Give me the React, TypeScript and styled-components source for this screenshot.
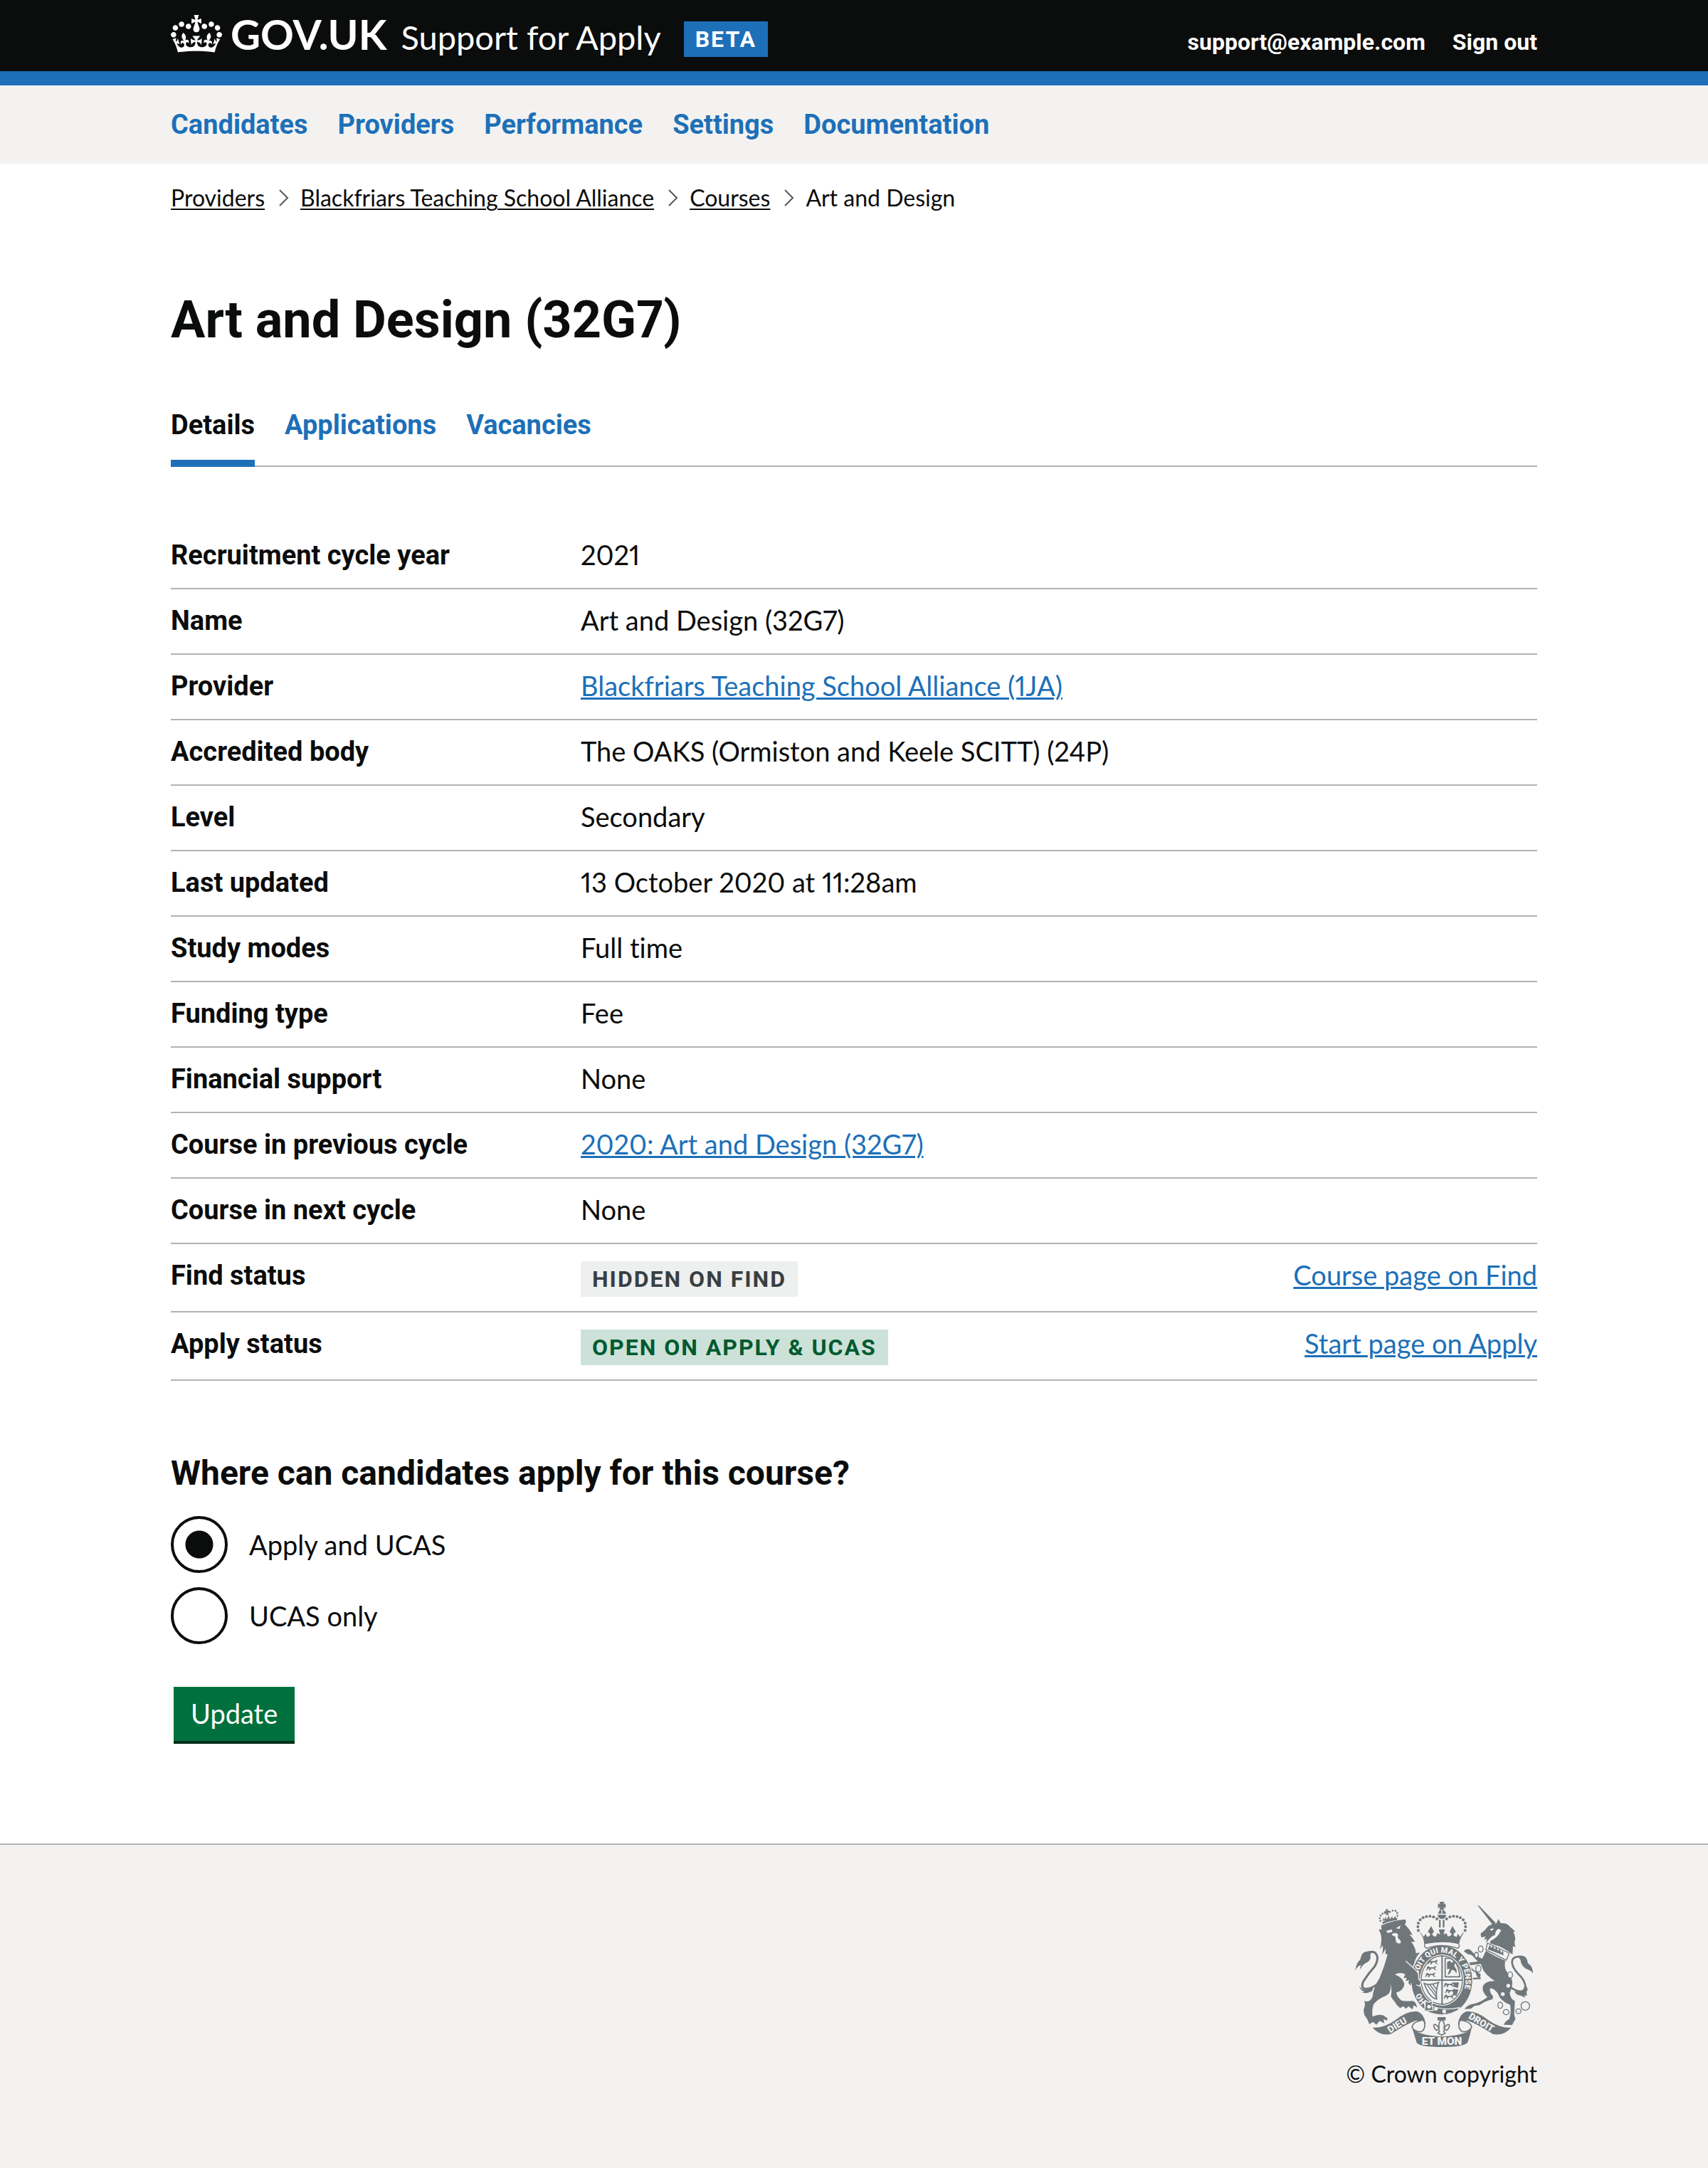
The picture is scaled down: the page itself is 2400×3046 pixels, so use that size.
import React from "react";
import styled, { createGlobalStyle } from "styled-components";

const c = {
  black: "#0b0c0c",
  blue: "#1d70b8",
  grey: "#f3f2f1",
  border: "#b1b4b6",
  crest: "#6f777b",
  green: "#00703c",
};
const bold = `font-family: Roboto, sans-serif; font-weight: 700;`;

const Global = createGlobalStyle`
  *, *::before, *::after { box-sizing: border-box; }
  body {
    margin: 0;
    background: ${c.grey};
    color: ${c.black};
    font-family: Lato, Roboto, sans-serif;
    font-size: 38px;
    line-height: 50px;
    font-variant-ligatures: none;
    font-variant-numeric: proportional-nums;
  }
  h1, h2, p, ul, ol, dl, dd, dt, fieldset { margin: 0; padding: 0; }
  ul, ol { list-style: none; }
  fieldset { border: 0; min-width: 0; }
`;

const Page = styled.div`
  background: #fff;
`;
const Container = styled.div`
  max-width: 1920px;
  margin: 0 auto;
`;

const Header = styled.header`
  background: ${c.black};
  border-bottom: 20px solid ${c.blue};
  color: #fff;
`;
const HeaderRow = styled(Container)`
  display: flex;
  justify-content: space-between;
  align-items: baseline;
  height: 100px;
  padding-top: 16px;
`;
const Brand = styled.div`
  display: flex;
  align-items: baseline;
`;
const HomeLink = styled.a`
  display: flex;
  align-items: baseline;
  gap: 12px;
  color: #fff;
  text-decoration: none;
  font-weight: 700;
  font-size: 58px;
  line-height: 64px;
`;
const Crown = styled.svg`
  width: 72px;
  height: 53px;
  fill: #fff;
  align-self: flex-end;
  margin-bottom: 6px;
`;
const ServiceLink = styled.a`
  color: #fff;
  text-decoration: none;
  font-size: 47px;
  line-height: 60px;
  margin-left: 20px;
`;
type Tone = "blue" | "grey" | "green";
const tones: Record<Tone, string> = {
  blue: `background: ${c.blue}; color: #fff;`,
  grey: `background: #eeefef; color: #383f43;`,
  green: `background: #cce2d8; color: #005a30;`,
};
const Tag = styled.strong<{ $tone: Tone }>`
  display: block;
  width: fit-content;
  padding: 5px 16px;
  ${bold}
  font-size: 32px;
  line-height: 40px;
  letter-spacing: 2px;
  text-transform: uppercase;
  ${(p) => tones[p.$tone]}
`;
const BrandTag = styled.div`
  align-self: flex-start;
  margin: 14px 0 0 32px;
`;
const Account = styled.ul`
  display: flex;
  gap: 38px;
  ${bold}
  font-size: 32px;
  line-height: 40px;
  a { color: #fff; text-decoration: none; }
`;

const NavBar = styled.nav`
  background: ${c.grey};
`;
const NavList = styled.ul`
  max-width: 1920px;
  margin: 0 auto;
  display: flex;
  gap: 42px;
  padding: 30px 0;
  ${bold}
  a { color: ${c.blue}; text-decoration: none; }
`;

const Crumbs = styled.ol`
  display: flex;
  align-items: center;
  padding-top: 28px;
  font-size: 32px;
  line-height: 40px;
  a {
    color: ${c.black};
    text-decoration-thickness: 2px;
    text-underline-offset: 3px;
  }
`;
const Crumb = styled.li`
  display: flex;
  align-items: center;
`;
const Chevron = styled.svg`
  width: 14px;
  height: 24px;
  margin: 0 16px 0 20px;
  fill: none;
  stroke: #505a5f;
  stroke-width: 2;
`;

const Title = styled.h1`
  margin-top: 112px;
  ${bold}
  font-size: 72px;
  line-height: 80px;
`;

const Tabs = styled.ul`
  display: flex;
  gap: 42px;
  margin-top: 82px;
  border-bottom: 2px solid ${c.border};
  ${bold}
`;
const Tab = styled.a<{ $active?: boolean }>`
  display: block;
  padding-bottom: 24px;
  margin-bottom: -2px;
  border-bottom: 10px solid ${(p) => (p.$active ? c.blue : "transparent")};
  color: ${(p) => (p.$active ? c.black : c.blue)};
  text-decoration: none;
`;

const Summary = styled.dl`
  margin-top: 80px;
`;
const Row = styled.div`
  display: grid;
  grid-template-columns: 30% 50% 20%;
  padding: 18px 0 22px;
  border-bottom: 2px solid ${c.border};
`;
const Key = styled.dt`
  ${bold}
  padding-top: 2px;
  line-height: 48px;
`;
const Value = styled.dd`
  ${Tag} {
    margin: 6px 0 -2px;
  }
`;
const Action = styled.dd`
  text-align: right;
`;
const Link = styled.a`
  color: ${c.blue};
  text-decoration-thickness: 3px;
  text-underline-offset: 2px;
`;

const Form = styled.form`
  padding-top: 100px;
`;
const Legend = styled.legend`
  padding: 0;
  ${bold}
  font-size: 48px;
  line-height: 60px;
  margin-bottom: 30px;
`;
const Radios = styled.div`
  display: grid;
  gap: 20px;
`;
const RadioLabel = styled.label`
  display: flex;
  align-items: center;
  gap: 30px;
`;
const Radio = styled.input`
  appearance: none;
  width: 80px;
  height: 80px;
  margin: 0;
  border: 4px solid ${c.black};
  border-radius: 50%;
  &:checked {
    background: radial-gradient(circle, ${c.black} 19px, transparent 20px);
  }
`;
const Submit = styled.button`
  display: block;
  margin: 60px 0 0 4px;
  padding: 10px 24px 16px;
  border: 0;
  background: ${c.green};
  box-shadow: inset 0 -4px 0 #002d18;
  color: #fff;
  font: inherit;
  height: 80px;
`;

const Footer = styled.footer`
  margin-top: 140px;
  border-top: 2px solid ${c.border};
  background: ${c.grey};
  padding: 80px 0 112px;
`;
const FooterInner = styled(Container)`
  display: flex;
  justify-content: flex-end;
`;
const Copyright = styled.a`
  display: flex;
  flex-direction: column;
  align-items: flex-end;
  gap: 18px;
  color: ${c.black};
  font-size: 32px;
  line-height: 40px;
  text-decoration: none;
`;
const CrestSvg = styled.svg`
  width: 250px;
  height: 204px;
  margin-right: 6px;
`;

const CROWN =
  "M25 30.2c3.5 1.5 7.7-.2 9.1-3.7 1.5-3.6-.2-7.8-3.9-9.2-3.6-1.4-7.6.3-9.1 3.9-1.4 3.5.3 7.5 3.9 9zM9 39.5c3.6 1.5 7.8-.2 9.2-3.7 1.5-3.6-.2-7.8-3.9-9.1-3.6-1.5-7.6.2-9.1 3.8-1.4 3.5.3 7.5 3.8 9zM4.4 57.2c3.5 1.5 7.7-.2 9.1-3.8 1.5-3.6-.2-7.7-3.9-9.1-3.5-1.5-7.6.3-9.1 3.8-1.4 3.5.3 7.6 3.9 9.1zm38.3-21.4c3.5 1.5 7.7-.2 9.1-3.8 1.5-3.6-.2-7.7-3.9-9.1-3.6-1.5-7.6.3-9.1 3.8-1.3 3.6.4 7.7 3.9 9.1zm64.4-5.6c-3.6 1.5-7.8-.2-9.1-3.7-1.5-3.6.2-7.8 3.8-9.2 3.6-1.4 7.7.3 9.2 3.9 1.3 3.5-.4 7.5-3.9 9zm15.9 9.3c-3.6 1.5-7.7-.2-9.1-3.7-1.5-3.6.2-7.8 3.7-9.1 3.6-1.5 7.7.2 9.2 3.8 1.5 3.5-.3 7.5-3.8 9zm4.7 17.7c-3.6 1.5-7.8-.2-9.2-3.8-1.5-3.6.2-7.7 3.9-9.1 3.6-1.5 7.7.3 9.2 3.8 1.3 3.5-.4 7.6-3.9 9.1zM89.3 35.8c-3.6 1.5-7.8-.2-9.2-3.8-1.4-3.6.2-7.7 3.9-9.1 3.6-1.5 7.7.3 9.2 3.8 1.4 3.6-.3 7.7-3.9 9.1zM69.7 17.7l8.9 4.7V9.3l-8.9 2.8c-.2-.3-.5-.6-.9-.9L72.4 0H59.6l3.5 11.2c-.3.3-.6.5-.9.9l-8.8-2.8v13.1l8.8-4.7c.3.3.6.7.9.9l-5 15.4v.1c-.2.8-.4 1.6-.4 2.4 0 4.1 3.1 7.5 7 8.1h.2c.3 0 .7.1 1 .1.4 0 .7 0 1-.1h.2c4-.6 7.1-4.1 7.1-8.1 0-.8-.1-1.7-.4-2.4V34l-5.1-15.4c.4-.2.7-.6 1-.9zM66 92.8c16.9 0 32.8 1.1 47.1 3.2 4-16.9 8.9-26.7 14-33.5l-9.6-3.4c1 4.9 1.1 7.2 0 10.2-1.5-1.4-3-4.3-4.2-8.7L108.6 76c2.8-2 5-3.2 7.5-3.3-4.4 9.4-10 11.9-13.6 11.2-4.3-.8-6.3-4.6-5.6-7.9 1-4.7 5.7-5.9 8-.5 4.3-8.7-3-11.4-7.6-8.8 7.1-7.2 7.9-13.5 2.1-21.1-8 6.1-8.1 12.3-4.5 20.8-4.7-5.4-12.1-2.5-9.5 6.2 3.4-5.2 7.9-2 7.2 3.1-.6 4.3-6.4 7.8-13.5 7.2-10.3-.9-10.9-8-11.2-13.8 2.5-.5 7.1 1.8 11 7.3L80.2 60c-4.1 4.4-8 5.3-12.3 5.4 1.4-4.4 8-11.6 8-11.6H55.5s6.4 7.2 7.9 11.6c-4.2-.1-8-1-12.3-5.4l1.4 16.4c3.9-5.5 8.5-7.7 10.9-7.3-.3 5.8-.9 12.8-11.1 13.8-7.2.6-12.9-2.9-13.5-7.2-.7-5 3.8-8.3 7.1-3.1 2.7-8.7-4.6-11.6-9.4-6.2 3.7-8.5 3.6-14.7-4.6-20.8-5.8 7.6-5 13.9 2.2 21.1-4.7-2.6-11.9.1-7.7 8.8 2.3-5.5 7.1-4.2 8.1.5.7 3.3-1.3 7.1-5.7 7.9-3.5.7-9-1.8-13.5-11.2 2.5.1 4.7 1.3 7.5 3.3l-4.7-15.4c-1.2 4.4-2.7 7.2-4.3 8.7-1.1-3-.9-5.3 0-10.2l-9.5 3.4c5 6.9 9.9 16.7 14 33.5 14.8-2.1 30.8-3.2 47.7-3.2z";

const beads: [number, number][] = [
  [399, 427], [397, 411], [399, 396], [407, 382], [419, 373], [433, 368], [448, 367], [463, 370], [477, 378],
  [596, 427], [598, 411], [596, 396], [588, 382], [576, 373], [562, 368], [547, 367], [532, 370], [518, 378],
];
const lionBeads: [number, number][] = [
  [239, 386], [236, 375], [240, 364], [248, 356], [258, 353], [279, 349], [291, 343], [303, 344], [310, 353], [311, 365],
];
const chainLinks = [
  [662, 505, 10, 13], [644, 530, 8, 11], [652, 588, 11, 14], [786, 614, 10, 13],
  [744, 742, 10, 13], [769, 771, 12, 11], [821, 767, 11, 10], [850, 745, 18, 18],
];

function Lioncel({ x, y }: { x: number; y: number }) {
  return (
    <path
      transform={`translate(${x} ${y})`}
      d="M0 6l8-5 5 5h16l8-6 4 5-6 3 1 6 7 5-9-1-5-7h-10l-4 8-6 1 3-9-6 1-5 7-4-2 5-8z"
    />
  );
}

function Crest() {
  const bg = c.grey;
  return (
    <CrestSvg viewBox="132 306 750 612" fill={c.crest} aria-hidden="true">
      {/* lion */}
      <path d="M242 406Q290 384 345 380L347 392L342 402Q362 420 374 446L361 443Q374 456 385 475L369 474Q388 500 389 523L406 520Q386 540 380 572L398 606Q404 620 396 634L408 646L402 660L390 655L378 665L372 655Q366 665 356 646L364 636L346 640L350 626L336 628L344 612Q326 600 300 612Q334 626 340 652Q338 680 306 688Q310 710 328 722Q350 726 368 724Q384 722 390 738L394 752L380 742L374 760L358 746L346 757L336 746L322 754Q306 742 300 728Q288 714 283 704Q290 676 280 650Q288 690 262 702Q226 716 210 738Q202 764 206 790Q230 778 252 785L270 798L266 806L252 800L256 818L236 808L222 824L208 812L192 822Q186 800 172 784L168 764L174 740L172 724Q196 732 206 706Q210 664 236 626Q256 580 270 526Q256 536 262 502L246 530Q252 500 248 490L236 506Q248 470 240 440L232 422L244 424Z" />
      <path d="M262 430l24 -8 4 10 -18 5zM304 418l20 -12 -4 14zM286 444q16-14 28 0l-2 14q14 10 14 20-10 8-20-2-4-12-4-24-8 0-16-8z" fill={bg} />
      {lionBeads.map(([x, y]) => <circle key={`${x}${y}`} cx={x} cy={y} r="4" />)}
      <path d="M246 392Q276 374 311 374L308 384Q276 386 250 400ZM250 386l0 -14 6 8 6-12 4 14 8-18 6 16 8-14 4 12 10-12 4 12zM264 362l-2-10-7 0 0-6 7 0-1-8 8-2 2 8 7-1 0 6-6 2 2 11z" />
      {/* lion tail */}
      <path d="M228 652Q196 676 170 672Q156 664 168 640Q190 606 214 580Q238 540 216 520Q200 512 184 522" fill="none" stroke={c.crest} strokeWidth="9" />
      <path d="M202 516Q168 510 158 534Q156 552 144 560Q136 574 132 596Q142 576 158 572Q152 582 154 590Q164 570 182 562Q202 550 196 532ZM150 660Q160 680 184 676L206 668Q212 680 192 688Q176 694 162 688L172 684Q152 680 150 660Z" />
      {/* unicorn */}
      <path d="M648 320L656 323L726 396L712 403ZM661 440Q680 428 694 408Q710 398 727 398L737 379L746 396Q772 394 782 408L806 430L800 434Q812 460 804 476L808 498L798 492L796 528Q756 496 722 488L700 480L704 470Q732 460 748 426L738 420Q724 424 722 446Q706 450 694 468L684 478L688 462L674 466L684 452L664 456Z" />
      <path d="M700 422q10-6 18-2l-10 8z" fill={bg} />
      <path d="M690 480L782 522L770 552L684 508Z" fill={bg} stroke={c.crest} strokeWidth="4" />
      <path d="M692 506l8-20 6 14 8-10 6 18 8-14 6 20 8-12 6 20 8-12 2 22z" />
      <path d="M684 512Q716 534 766 554Q756 590 784 616Q806 646 784 690Q788 718 806 724L803 780L808 800L794 826L758 824Q768 806 782 800Q792 776 786 740Q744 724 734 692Q712 664 700 672Q700 690 714 704L712 716Q676 726 656 742L636 745L620 757L594 758Q608 738 634 736Q664 728 690 708Q664 682 672 660Q684 638 722 640Q690 620 674 596L662 568L616 574Q626 592 644 600L662 612L658 630L646 620L640 604Q616 592 606 572L614 562L650 558L624 530L606 526L590 514Q604 500 620 510L640 532L668 546Z" />
      <path d="M612 574l-4 40 22 16 32-2" fill="none" stroke={c.crest} strokeWidth="7" />
      {chainLinks.map(([x, y, a, b]) => (
        <ellipse key={x} cx={x} cy={y} rx={a} ry={b} fill={bg} stroke={c.crest} strokeWidth="4" />
      ))}
      <circle cx="778" cy="660" r="8" fill={bg} />
      <circle cx="755" cy="695" r="8" fill={bg} />
      <path d="M784 664Q836 700 850 670Q852 640 820 610Q784 570 798 546Q814 532 836 540" fill="none" stroke={c.crest} strokeWidth="8" />
      <path d="M818 534Q850 528 858 552Q858 566 872 574Q882 588 882 608Q874 594 852 588Q830 572 830 552ZM846 640Q852 676 828 686L804 684Q812 700 832 702L850 710L846 700L858 702Q852 688 860 676Z" />
      {/* garter */}
      <ellipse cx="498" cy="637" rx="130" ry="149" stroke={bg} strokeWidth="4" />
      <ellipse cx="498" cy="636" rx="93" ry="108" fill={bg} />
      <ellipse cx="498" cy="636" rx="87" ry="102" fill="none" stroke={c.crest} strokeWidth="4" />
      <path d="M496 532h6v208h-6zM410 633h176v6h-176z" />
      <Lioncel x={440} y={550} /><Lioncel x={434} y={576} /><Lioncel x={430} y={604} />
      <Lioncel x={508} y={646} /><Lioncel x={514} y={672} /><Lioncel x={508} y={696} />
      <path d="M546 646l24 0-4 24-18-6zM548 674l20 2-8 26-16-4z" />
      <path d="M512 544h20q36 14 42 78h-62z" fill="none" stroke={c.crest} strokeWidth="5" />
      <path d="M520 560l12-6 8 10 6-8 8 8-4 12 10 16 0 18-8-14-12-4-6 14-12 10 6-18 4-10-12 2z" />
      <path d="M424 650q24 10 60-4-12 30-8 70-32-6-52-66z" fill="none" stroke={c.crest} strokeWidth="5" />
      <path d="M436 656l40 52M448 656l28 38M460 654l16 22" stroke={c.crest} strokeWidth="4" fill="none" />
      <defs>
        <path id="garter-start" d="M432 727A100 116 0 0 1 398 637" />
        <path id="garter-motto" d="M399 616A100 116 0 1 1 498 753" />
      </defs>
      <g fill={bg} fontFamily="Roboto, sans-serif" fontWeight="900" fontSize="33">
        <text><textPath href="#garter-start">HO</textPath></text>
        <text><textPath href="#garter-motto">SOIT QUI MAL Y PENSE</textPath></text>
      </g>
      {/* lion's raised paw */}
      <path d="M346 556L386 592Q404 606 400 630L412 646L404 662L391 656L379 667L371 652L360 640Z" />
      <path d="M346 556L386 592Q404 606 400 630L412 646L404 662L391 656" stroke={bg} strokeWidth="4" fill="none" />
      {/* belt */}
      <path d="M424 732Q498 770 572 752L566 764Q500 800 430 766Z" stroke={bg} strokeWidth="4" />
      <path d="M428 722l14 8 18-6-4 18 6 22-20 0-18 4 4-22z" stroke={bg} strokeWidth="4" />
      <circle cx="444" cy="748" r="8" fill={bg} /><circle cx="473" cy="757" r="8" fill={bg} /><circle cx="508" cy="768" r="8" fill={bg} />
      {/* royal crown */}
      {beads.map(([x, y]) => <circle key={`${x}-${y}`} cx={x} cy={y} r="6" />)}
      <path d="M487 306h22l-5 11 10-4v20l-10-5 5 11h-22l5-11-10 5v-20l10 4zM482 356q4-16 14-16v16zM500 340q12 2 16 16h-16zM480 361h36q0 14-14 17h-8q-14-3-14-17zM486 382h7v32h-7zM502 382h7v32h-7z" />
      <path d="M403 432q14 10 18 22l10-14 4 14q14-2 14-12l-10-10 14-24 12 24-8 10q4 12 16 10l6-14 12 6-6-22h26l-6 22 12-6 6 14q14 0 16-10l-8-10 12-24 14 24-10 10q0 10 14 12l4-14 10 14q4-12 18-22-20 30-22 52H424q-2-30-21-52z" />
      <path d="M428 482Q498 466 568 482Q576 492 566 502Q530 490 498 490Q466 490 432 502Q420 492 428 482Z" fill={bg} stroke={c.crest} strokeWidth="4" />
      {/* ribbon */}
      <path d="M206 836Q250 840 300 806Q350 764 394 768Q422 776 430 820L414 822Q408 808 390 806Q350 820 282 864Q236 872 206 836Z" />
      <path d="M790 836Q746 840 696 806Q646 764 602 768Q574 776 566 820L582 822Q588 808 606 806Q646 820 714 864Q760 872 790 836Z" />
      <path d="M412 806Q376 812 372 834Q380 854 412 854Q432 838 424 812M584 806Q620 812 624 834Q616 854 584 854Q564 838 572 812" fill={bg} stroke={c.crest} strokeWidth="5" />
      <path d="M372 834Q386 868 498 874Q610 868 624 834Q618 868 606 900C590 916 540 918 498 918C456 918 406 916 392 900Z" />
      <g fill={bg} fontFamily="Roboto, sans-serif" fontWeight="900">
        <text fontSize="40" transform="translate(280 860) rotate(-32)">DIEU</text>
        <text fontSize="46" x="498" y="909" textAnchor="middle">ET MON</text>
        <text fontSize="40" transform="translate(608 796) rotate(31)">DROIT</text>
      </g>
      {/* fleur-de-lis pendant */}
      <path d="M480 792h34v14h-34z" />
      <path d="M497 802Q480 818 488 840Q470 816 464 826Q464 840 476 848L484 842L488 852L482 860L497 868L512 860L506 852L510 842L518 848Q530 840 530 826Q524 816 506 840Q514 818 497 802Z" fill={bg} stroke={c.crest} strokeWidth="5" />
    </CrestSvg>
  );
}

const nav = ["Candidates", "Providers", "Performance", "Settings", "Documentation"];
const crumbs = ["Providers", "Blackfriars Teaching School Alliance", "Courses"];
const rows: { k: string; v: React.ReactNode; a?: string }[] = [
  { k: "Recruitment cycle year", v: "2021" },
  { k: "Name", v: "Art and Design (32G7)" },
  { k: "Provider", v: <Link href="#provider">Blackfriars Teaching School Alliance (1JA)</Link> },
  { k: "Accredited body", v: "The OAKS (Ormiston and Keele SCITT) (24P)" },
  { k: "Level", v: "Secondary" },
  { k: "Last updated", v: "13 October 2020 at 11:28am" },
  { k: "Study modes", v: "Full time" },
  { k: "Funding type", v: "Fee" },
  { k: "Financial support", v: "None" },
  { k: "Course in previous cycle", v: <Link href="#previous">2020: Art and Design (32G7)</Link> },
  { k: "Course in next cycle", v: "None" },
  { k: "Find status", v: <Tag $tone="grey">Hidden on Find</Tag>, a: "Course page on Find" },
  { k: "Apply status", v: <Tag $tone="green">Open on Apply &amp; UCAS</Tag>, a: "Start page on Apply" },
];

export default function App() {
  return (
    <>
      <Global />
      <Page>
        <Header>
          <HeaderRow>
            <Brand>
              <HomeLink href="#home">
                <Crown viewBox="0 0 132 97" aria-hidden="true"><path d={CROWN} /></Crown>
                GOV.UK
              </HomeLink>
              <ServiceLink href="#service">Support for Apply</ServiceLink>
              <BrandTag><Tag $tone="blue">Beta</Tag></BrandTag>
            </Brand>
            <Account>
              <li><a href="#account">support@example.com</a></li>
              <li><a href="#signout">Sign out</a></li>
            </Account>
          </HeaderRow>
        </Header>
        <NavBar aria-label="Primary">
          <NavList>
            {nav.map((n) => <li key={n}><a href={`#${n}`}>{n}</a></li>)}
          </NavList>
        </NavBar>
        <Container>
          <Crumbs aria-label="Breadcrumb">
            {crumbs.map((n) => (
              <Crumb key={n}>
                <a href={`#${n}`}>{n}</a>
                <Chevron viewBox="0 0 14 24" aria-hidden="true"><path d="M1 1L12 12L1 23" /></Chevron>
              </Crumb>
            ))}
            <Crumb>Art and Design</Crumb>
          </Crumbs>
          <main>
            <Title>Art and Design (32G7)</Title>
            <Tabs>
              <li><Tab $active href="#details" aria-current="page">Details</Tab></li>
              <li><Tab href="#applications">Applications</Tab></li>
              <li><Tab href="#vacancies">Vacancies</Tab></li>
            </Tabs>
            <Summary>
              {rows.map((r) => (
                <Row key={r.k}>
                  <Key>{r.k}</Key>
                  <Value>{r.v}</Value>
                  {r.a && <Action><Link href="#page">{r.a}</Link></Action>}
                </Row>
              ))}
            </Summary>
            <Form onSubmit={(e) => e.preventDefault()}>
              <fieldset>
                <Legend>Where can candidates apply for this course?</Legend>
                <Radios>
                  <RadioLabel htmlFor="both"><Radio id="both" type="radio" name="where" defaultChecked />Apply and UCAS</RadioLabel>
                  <RadioLabel htmlFor="ucas"><Radio id="ucas" type="radio" name="where" />UCAS only</RadioLabel>
                </Radios>
              </fieldset>
              <Submit type="submit">Update</Submit>
            </Form>
          </main>
        </Container>
        <Footer>
          <FooterInner>
            <Copyright href="#copyright">
              <Crest />
              © Crown copyright
            </Copyright>
          </FooterInner>
        </Footer>
      </Page>
    </>
  );
}
